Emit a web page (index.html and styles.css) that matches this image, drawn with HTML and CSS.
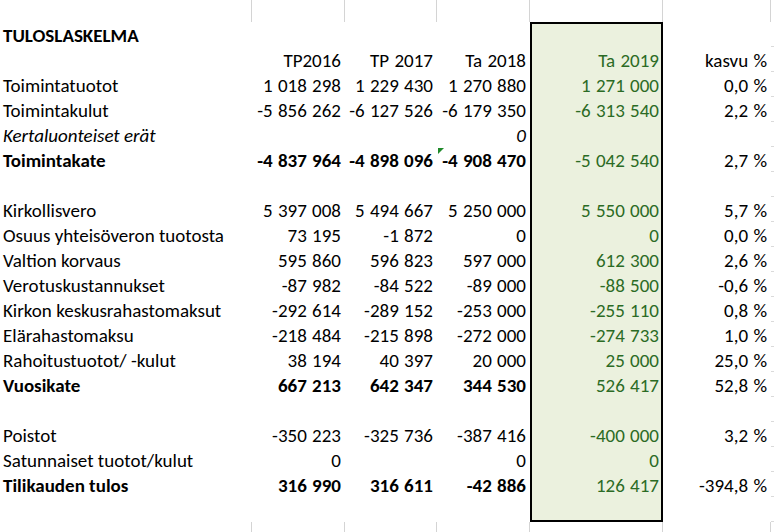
FILE: index.html
```html
<!DOCTYPE html>
<html lang="fi">
<head>
<meta charset="utf-8">
<title>Tuloslaskelma</title>
<link rel="stylesheet" href="styles.css">
</head>
<body>
<div class="sheet">
  <div class="row band">
    <div class="c a"></div><div class="c n"></div><div class="c n"></div><div class="c n"></div><div class="c n"></div><div class="c n"></div><div class="c g"></div>
  </div>

  <div class="row"><div class="c a b">TULOSLASKELMA</div><div class="c n"></div><div class="c n"></div><div class="c n"></div><div class="c n e first"></div><div class="c n"></div><div class="c g"></div></div>
  <div class="row"><div class="c a"></div><div class="c n">TP2016</div><div class="c n">TP 2017</div><div class="c n">Ta 2018</div><div class="c n e">Ta 2019</div><div class="c n">kasvu %</div><div class="c g"></div></div>
  <div class="row"><div class="c a">Toimintatuotot</div><div class="c n">1 018 298</div><div class="c n">1 229 430</div><div class="c n">1 270 880</div><div class="c n e">1 271 000</div><div class="c n">0,0 %</div><div class="c g"></div></div>
  <div class="row"><div class="c a">Toimintakulut</div><div class="c n">-5 856 262</div><div class="c n">-6 127 526</div><div class="c n">-6 179 350</div><div class="c n e">-6 313 540</div><div class="c n">2,2 %</div><div class="c g"></div></div>
  <div class="row"><div class="c a i">Kertaluonteiset erät</div><div class="c n"></div><div class="c n"></div><div class="c n i">0</div><div class="c n e"></div><div class="c n"></div><div class="c g"></div></div>
  <div class="row"><div class="c a b">Toimintakate</div><div class="c n b">-4 837 964</div><div class="c n b">-4 898 096</div><div class="c n b flag">-4 908 470</div><div class="c n e">-5 042 540</div><div class="c n">2,7 %</div><div class="c g"></div></div>
  <div class="row"><div class="c a"></div><div class="c n"></div><div class="c n"></div><div class="c n"></div><div class="c n e"></div><div class="c n"></div><div class="c g"></div></div>
  <div class="row"><div class="c a">Kirkollisvero</div><div class="c n">5 397 008</div><div class="c n">5 494 667</div><div class="c n">5 250 000</div><div class="c n e">5 550 000</div><div class="c n">5,7 %</div><div class="c g"></div></div>
  <div class="row"><div class="c a">Osuus yhteisöveron tuotosta</div><div class="c n">73 195</div><div class="c n">-1 872</div><div class="c n">0</div><div class="c n e">0</div><div class="c n">0,0 %</div><div class="c g"></div></div>
  <div class="row"><div class="c a">Valtion korvaus</div><div class="c n">595 860</div><div class="c n">596 823</div><div class="c n">597 000</div><div class="c n e">612 300</div><div class="c n">2,6 %</div><div class="c g"></div></div>
  <div class="row"><div class="c a">Verotuskustannukset</div><div class="c n">-87 982</div><div class="c n">-84 522</div><div class="c n">-89 000</div><div class="c n e">-88 500</div><div class="c n">-0,6 %</div><div class="c g"></div></div>
  <div class="row"><div class="c a">Kirkon keskusrahastomaksut</div><div class="c n">-292 614</div><div class="c n">-289 152</div><div class="c n">-253 000</div><div class="c n e">-255 110</div><div class="c n">0,8 %</div><div class="c g"></div></div>
  <div class="row"><div class="c a">Elärahastomaksu</div><div class="c n">-218 484</div><div class="c n">-215 898</div><div class="c n">-272 000</div><div class="c n e">-274 733</div><div class="c n">1,0 %</div><div class="c g"></div></div>
  <div class="row"><div class="c a">Rahoitustuotot/ -kulut</div><div class="c n">38 194</div><div class="c n">40 397</div><div class="c n">20 000</div><div class="c n e">25 000</div><div class="c n">25,0 %</div><div class="c g"></div></div>
  <div class="row"><div class="c a b">Vuosikate</div><div class="c n b">667 213</div><div class="c n b">642 347</div><div class="c n b">344 530</div><div class="c n e">526 417</div><div class="c n">52,8 %</div><div class="c g"></div></div>
  <div class="row"><div class="c a"></div><div class="c n"></div><div class="c n"></div><div class="c n"></div><div class="c n e"></div><div class="c n"></div><div class="c g"></div></div>
  <div class="row"><div class="c a">Poistot</div><div class="c n">-350 223</div><div class="c n">-325 736</div><div class="c n">-387 416</div><div class="c n e">-400 000</div><div class="c n">3,2 %</div><div class="c g"></div></div>
  <div class="row"><div class="c a">Satunnaiset tuotot/kulut</div><div class="c n">0</div><div class="c n"></div><div class="c n">0</div><div class="c n e">0</div><div class="c n"></div><div class="c g"></div></div>
  <div class="row"><div class="c a b">Tilikauden tulos</div><div class="c n b">316 990</div><div class="c n b">316 611</div><div class="c n b">-42 886</div><div class="c n e">126 417</div><div class="c n">-394,8 %</div><div class="c g"></div></div>
  <div class="row"><div class="c a"></div><div class="c n"></div><div class="c n"></div><div class="c n"></div><div class="c n e last"></div><div class="c n"></div><div class="c g"></div></div>

  <div class="row band bottom">
    <div class="c a"></div><div class="c n"></div><div class="c n"></div><div class="c n"></div><div class="c n"></div><div class="c n"></div><div class="c g"></div>
  </div>
</div>
</body>
</html>
```

FILE: styles.css
```css
html, body {
  margin: 0;
  padding: 0;
  background: #ffffff;
}

body {
  font-family: Carlito, Lato, "Open Sans", sans-serif;
  font-size: 19px;
  color: #000000;
  overflow: hidden;
}

.sheet {
  width: 774px;
  display: flex;
  flex-direction: column;
}

.row {
  display: grid;
  grid-template-columns: 252px 93px 92px 93px 133px 108px 3px;
  height: 25px;
}

.c {
  display: flex;
  align-items: flex-end;
  white-space: nowrap;
  line-height: 22px;
  padding-bottom: 0;
  box-sizing: border-box;
  overflow: visible;
  position: relative;
}

.a {
  justify-content: flex-start;
  padding-left: 3px;
}

.n {
  justify-content: flex-end;
  padding-right: 4px;
  word-spacing: 1px;
}

.b { font-weight: 700; }
.i { font-style: italic; }

.g {
  border-bottom: 1px solid #dadada;
}

/* gridline bands (above and below the white-filled area) */
.band {
  height: 22px;
}

.band .c {
  border-right: 1px solid #d4d4d4;
}

.band .g {
  border-right: 0;
  border-bottom: 0;
  border-left: 1px solid #d4d4d4;
  margin-left: -1px;
}

.band.bottom {
  height: 10px;
}

/* highlighted budget column */
.e {
  background: #ebf1de;
  color: #2b6b25;
  border-left: 2px solid #000000;
  border-right: 2px solid #000000;
  padding-right: 2px;
}

.e.first {
  border-top: 2px solid #000000;
}

.e.last {
  border-bottom: 2px solid #000000;
}

/* error indicator triangle */
.flag::before {
  content: "";
  position: absolute;
  left: 1px;
  top: 1px;
  width: 0;
  height: 0;
  border-top: 6px solid #1f8a2a;
  border-right: 6px solid transparent;
}
```
